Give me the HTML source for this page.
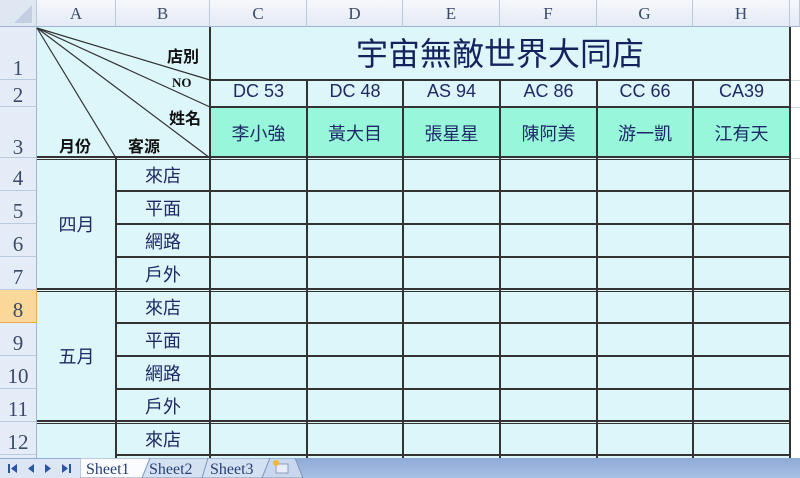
<!DOCTYPE html>
<html><head><meta charset="utf-8"><style>
*{margin:0;padding:0;box-sizing:border-box}
body{width:800px;height:478px;overflow:hidden;background:#fff;position:relative;font-family:"Liberation Sans","Noto Sans CJK TC",sans-serif}
div{position:absolute}
.ch{top:0;height:27px;background:linear-gradient(#f6f8fb,#e4ebf5);border-right:1px solid #b9c9df;border-bottom:1px solid #9fb5d3;font-family:"Liberation Serif",serif;font-size:17px;color:#3a4a68;text-align:center;line-height:28px}
.rh{left:0;width:37px;background:#e4ecf7;border-bottom:1px solid #b9c9df;border-right:1px solid #9fb5d3;font-family:"Liberation Serif",serif;font-size:21px;color:#3a4a68;text-align:center}
.h{background:#333;height:2px}
.v{background:#333;width:2px}
.t{color:#1c2a66;text-align:center;font-size:18px}
.b{color:#111;font-size:16px;font-weight:bold}
</style></head><body>
<div style="left:37px;top:27px;width:752px;height:431px;background:#dcf6f9"></div>
<div style="left:210px;top:107px;width:579px;height:51px;background:#98f6da"></div>
<div style="left:790px;top:27px;width:10px;height:431px;background:#fff"></div>
<div class="ch" style="left:0;width:37px;background:#dfe7f2"><svg width="37" height="27" style="position:absolute;left:0;top:0"><polygon points="32,5 32,23 14,23" fill="#c3cfe0"/></svg></div>
<div class="ch" style="left:37px;width:79px">A</div>
<div class="ch" style="left:116px;width:94px">B</div>
<div class="ch" style="left:210px;width:97px">C</div>
<div class="ch" style="left:307px;width:96px">D</div>
<div class="ch" style="left:403px;width:97px">E</div>
<div class="ch" style="left:500px;width:97px">F</div>
<div class="ch" style="left:597px;width:96px">G</div>
<div class="ch" style="left:693px;width:97px">H</div>
<div class="ch" style="left:790px;width:10px"></div>
<div class="rh" style="top:27px;height:53px;line-height:82px">1</div>
<div class="rh" style="top:80px;height:27px;line-height:30px">2</div>
<div class="rh" style="top:107px;height:51px;line-height:80px">3</div>
<div class="rh" style="top:158px;height:33px;line-height:40px">4</div>
<div class="rh" style="top:191px;height:33px;line-height:40px">5</div>
<div class="rh" style="top:224px;height:33px;line-height:40px">6</div>
<div class="rh" style="top:257px;height:33px;line-height:40px">7</div>
<div class="rh" style="top:290px;height:33px;line-height:40px;background:#f9d89a;border-color:#e8a94f">8</div>
<div class="rh" style="top:323px;height:33px;line-height:40px">9</div>
<div class="rh" style="top:356px;height:33px;line-height:40px">10</div>
<div class="rh" style="top:389px;height:33px;line-height:40px">11</div>
<div class="rh" style="top:422px;height:33px;line-height:40px">12</div>
<div class="rh" style="top:455px;height:10px"></div>
<div style="left:790px;top:80px;width:10px;height:1px;background:#d0d7e5"></div>
<div style="left:790px;top:107px;width:10px;height:1px;background:#d0d7e5"></div>
<div style="left:790px;top:158px;width:10px;height:1px;background:#d0d7e5"></div>
<svg width="800" height="478" style="position:absolute;left:0;top:0">
<g stroke="#333" stroke-width="1.2">
<line x1="37" y1="28" x2="210" y2="80"/>
<line x1="37" y1="28" x2="210" y2="107"/>
<line x1="37" y1="28" x2="210" y2="158"/>
<line x1="37" y1="28" x2="116" y2="158"/>
</g></svg>
<div class="h" style="left:210px;top:79px;width:580px"></div>
<div class="h" style="left:210px;top:106px;width:580px"></div>
<div class="h" style="left:37px;top:156px;width:753px"></div>
<div class="h" style="left:37px;top:159px;width:753px;height:1px"></div>
<div class="h" style="left:116px;top:190px;width:674px"></div>
<div class="h" style="left:116px;top:223px;width:674px"></div>
<div class="h" style="left:116px;top:256px;width:674px"></div>
<div class="h" style="left:37px;top:288px;width:753px"></div>
<div class="h" style="left:37px;top:291px;width:753px;height:1px"></div>
<div class="h" style="left:116px;top:322px;width:674px"></div>
<div class="h" style="left:116px;top:355px;width:674px"></div>
<div class="h" style="left:116px;top:388px;width:674px"></div>
<div class="h" style="left:37px;top:420px;width:753px"></div>
<div class="h" style="left:37px;top:423px;width:753px;height:1px"></div>
<div class="h" style="left:116px;top:454px;width:674px"></div>
<div class="v" style="left:209px;top:27px;height:431px"></div>
<div class="v" style="left:115px;top:158px;height:300px"></div>
<div class="v" style="left:306px;top:80px;height:378px"></div>
<div class="v" style="left:402px;top:80px;height:378px"></div>
<div class="v" style="left:499px;top:80px;height:378px"></div>
<div class="v" style="left:596px;top:80px;height:378px"></div>
<div class="v" style="left:692px;top:80px;height:378px"></div>
<div class="v" style="left:789px;top:27px;height:431px"></div>
<div class="b" style="left:167px;top:43px">店別</div>
<div class="b" style="left:172px;top:75px;font-family:'Liberation Serif',serif;font-size:13px">NO</div>
<div class="b" style="left:169px;top:105px">姓名</div>
<div class="b" style="left:59px;top:133px">月份</div>
<div class="b" style="left:128px;top:133px">客源</div>
<div class="t" style="left:210px;top:29px;width:580px;font-size:32px;color:#14225e">宇宙無敵世界大同店</div>
<div class="t" style="left:210px;top:81px;width:97px">DC 53</div>
<div class="t" style="left:307px;top:81px;width:96px">DC 48</div>
<div class="t" style="left:403px;top:81px;width:97px">AS 94</div>
<div class="t" style="left:500px;top:81px;width:97px">AC 86</div>
<div class="t" style="left:597px;top:81px;width:96px">CC 66</div>
<div class="t" style="left:693px;top:81px;width:97px">CA39</div>
<div class="t" style="left:210px;top:120px;width:97px">李小強</div>
<div class="t" style="left:307px;top:120px;width:96px">黃大目</div>
<div class="t" style="left:403px;top:120px;width:97px">張星星</div>
<div class="t" style="left:500px;top:120px;width:97px">陳阿美</div>
<div class="t" style="left:597px;top:120px;width:96px">游一凱</div>
<div class="t" style="left:693px;top:120px;width:97px">江有天</div>
<div class="t" style="left:37px;top:211px;width:79px">四月</div>
<div class="t" style="left:37px;top:343px;width:79px">五月</div>
<div class="t" style="left:116px;top:162px;width:94px">來店</div>
<div class="t" style="left:116px;top:195px;width:94px">平面</div>
<div class="t" style="left:116px;top:228px;width:94px">網路</div>
<div class="t" style="left:116px;top:261px;width:94px">戶外</div>
<div class="t" style="left:116px;top:294px;width:94px">來店</div>
<div class="t" style="left:116px;top:327px;width:94px">平面</div>
<div class="t" style="left:116px;top:360px;width:94px">網路</div>
<div class="t" style="left:116px;top:393px;width:94px">戶外</div>
<div class="t" style="left:116px;top:426px;width:94px">來店</div>
<div style="left:0;top:458px;width:800px;height:20px;background:linear-gradient(#8eaad6,#a7bfe3)"></div>
<div style="left:0;top:459px;width:80px;height:19px;background:#dce6f4"></div>
<svg width="80" height="19" style="position:absolute;left:0;top:459px"><g fill="#2c55a0"><rect x="8" y="5" width="2" height="9"/><polygon points="17,5 11,9.5 17,14"/><polygon points="34,5 28,9.5 34,14"/><polygon points="45,5 51,9.5 45,14"/><polygon points="62,5 68,9.5 62,14"/><rect x="69" y="5" width="2" height="9"/></g></svg>
<svg width="230" height="20" style="position:absolute;left:80px;top:458px">
<polygon points="0,0 70,0 78,20 0,20" fill="#fafcff" stroke="#7d95bd"/>
<polygon points="70,0 128,0 136,20 62,20" fill="#d4e1f2" stroke="#7d95bd"/>
<polygon points="128,0 190,0 198,20 122,20" fill="#d4e1f2" stroke="#7d95bd"/>
<polygon points="190,0 215,0 223,20 182,20" fill="#c8d7ee" stroke="#7d95bd"/>
<rect x="196" y="6" width="12" height="9" fill="#e8eef8" stroke="#8a9cc0"/>
<circle cx="196" cy="5" r="3" fill="#f5b830"/>
<text x="6" y="16" font-family="Liberation Serif" font-size="16" fill="#2a3f78">Sheet1</text>
<text x="69" y="16" font-family="Liberation Serif" font-size="16" fill="#2a3f78">Sheet2</text>
<text x="130" y="16" font-family="Liberation Serif" font-size="16" fill="#2a3f78">Sheet3</text>
</svg>
</body></html>
